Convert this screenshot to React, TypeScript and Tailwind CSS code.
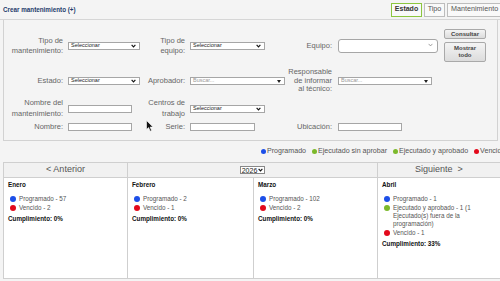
import React from 'react';

function Chevron({ light }: { light?: boolean }) {
  return (
    <svg width="5" height="4" viewBox="0 0 8 6" className="shrink-0">
      <path d="M1 1.2 L4 4.5 L7 1.2" fill="none" stroke={light ? '#777' : '#111'} strokeWidth={light ? 1.1 : 1.8} />
    </svg>
  );
}

function Tri() {
  return (
    <svg width="4" height="3" viewBox="0 0 4 3" className="shrink-0">
      <polygon points="0,0 4,0 2,3" fill="#222" />
    </svg>
  );
}

function Select({ w, text, kind = 'chev' }: { w: string; text: string; kind?: 'chev' | 'tri' }) {
  return (
    <div className={`${w} h-[8px] border border-[#a6a6a6] bg-white flex items-center justify-between pl-[2px] pr-[3px]`}>
      <span className={`text-[5.5px] leading-none ${kind === 'tri' ? 'text-[#999]' : 'text-[#222]'}`}>{text}</span>
      {kind === 'tri' ? <Tri /> : <Chevron />}
    </div>
  );
}

function Input({ w }: { w: string }) {
  return <div className={`${w} h-[8px] border border-[#a6a6a6] bg-white`} />;
}

function Label({ children, pr = 'pr-[5px]', lead = 'leading-[10px]' }: { children: React.ReactNode; pr?: string; lead?: string }) {
  return <div className={`text-right text-[7.5px] text-[#666] ${lead} ${pr}`}>{children}</div>;
}

type Item = { color: string; text: string };

const months: { name: string; items: Item[]; pct: string }[] = [
  { name: 'Enero', items: [{ color: 'bg-[#1d4fe8]', text: 'Programado - 57' }, { color: 'bg-[#e3091b]', text: 'Vencido - 2' }], pct: '0%' },
  { name: 'Febrero', items: [{ color: 'bg-[#1d4fe8]', text: 'Programado - 2' }, { color: 'bg-[#e3091b]', text: 'Vencido - 1' }], pct: '0%' },
  { name: 'Marzo', items: [{ color: 'bg-[#1d4fe8]', text: 'Programado - 102' }, { color: 'bg-[#e3091b]', text: 'Vencido - 2' }], pct: '0%' },
  {
    name: 'Abril',
    items: [
      { color: 'bg-[#1d4fe8]', text: 'Programado - 1' },
      { color: 'bg-[#7cb92b]', text: 'Ejecutado y aprobado - 1 (1 Ejecutado(s) fuera de la programación)' },
      { color: 'bg-[#e3091b]', text: 'Vencido - 1' },
    ],
    pct: '33%',
  },
];

export default function App() {
  return (
    <div className="relative w-[500px] h-[281px] overflow-hidden bg-[#f4f4f4] font-['Liberation_Sans',Arial,sans-serif]">
      {/* header */}
      <div className="h-[20px] border-b border-[#d6d6d6] flex items-center pl-[3px]">
        <div className="w-[388px] shrink-0 text-[6.3px] font-bold text-[#1f3b6b]">Crear mantenimiento (+)</div>
        <div className="flex gap-[2px] shrink-0">
          <div className="h-[14px] w-[31px] border-[1.5px] border-[#8cc63e] bg-[#f9f9f9] flex items-center justify-center text-[7px] font-bold text-[#333]">Estado</div>
          <div className="h-[14px] w-[21px] border border-[#bdbdbd] bg-[#f9f9f9] flex items-center justify-center text-[7.2px] text-[#555]">Tipo</div>
          <div className="h-[14px] w-[60px] border border-[#bdbdbd] bg-[#f9f9f9] flex items-center pl-[3px] text-[7.2px] text-[#555]">Mantenimiento</div>
        </div>
      </div>

      {/* filters */}
      <div className="ml-[3px] w-[495px] h-[121px] border-l border-r border-b border-[#d2d2d2] pt-[7px]">
        <div className="grid grid-cols-[64px_75px_47px_95px_53px_106px_42px] grid-rows-[37px_34px_21px_16px] items-center">
          <Label>Tipo de<br />mantenimiento:</Label>
          <Select w="w-[72px]" text="Seleccionar" />
          <Label>Tipo de<br />equipo:</Label>
          <Select w="w-[75px]" text="Seleccionar" />
          <Label pr="pr-[6px]">Equipo:</Label>
          <div className="w-[100px] h-[14px] rounded-[3px] border border-[#a6a6a6] bg-white flex items-start justify-end pr-[4px] pt-[3px]">
            <Chevron light />
          </div>
          <div className="flex flex-col gap-[3px]">
            <div className="h-[10px] w-[42px] rounded-[2px] border border-[#a9a9a9] bg-gradient-to-b from-[#f4f4f4] to-[#dcdcdc] flex items-center justify-center text-[6px] font-bold text-[#444]">Consultar</div>
            <div className="h-[20px] w-[42px] rounded-[2px] border border-[#a9a9a9] bg-gradient-to-b from-[#f4f4f4] to-[#dcdcdc] flex items-center justify-center text-center text-[6px] leading-[7.5px] font-bold text-[#444]">Mostrar<br />todo</div>
          </div>

          <Label>Estado:</Label>
          <Select w="w-[72px]" text="Seleccionar" />
          <Label>Aprobador:</Label>
          <Select w="w-[95px]" text="Buscar..." kind="tri" />
          <Label pr="pr-[6px]" lead="leading-[8.5px]">Responsable<br />de informar<br />al técnico:</Label>
          <Select w="w-[94px]" text="Buscar..." kind="tri" />
          <div />

          <Label lead="leading-[10.5px]">Nombre del<br />mantenimiento:</Label>
          <Input w="w-[64px]" />
          <Label lead="leading-[10.5px]">Centros de<br />trabajo</Label>
          <Select w="w-[75px]" text="Seleccionar" />
          <div />
          <div />
          <div />

          <Label>Nombre:</Label>
          <Input w="w-[64px]" />
          <Label>Serie:</Label>
          <Input w="w-[65px]" />
          <Label pr="pr-[6px]">Ubicación:</Label>
          <Input w="w-[64px]" />
          <div />
        </div>
      </div>

      {/* legend */}
      <div className="h-[21px] flex items-center pl-[261px] whitespace-nowrap text-[7.1px] text-[#555]">
        <span className="w-[5px] h-[5px] rounded-full bg-[#1d4fe8] mr-[1px] shrink-0" />
        <span className="mr-[6px]">Programado</span>
        <span className="w-[5px] h-[5px] rounded-full bg-[#7cb92b] mr-[1px] shrink-0" />
        <span className="mr-[6px]">Ejecutado sin aprobar</span>
        <span className="w-[5px] h-[5px] rounded-full bg-[#7cb92b] mr-[1px] shrink-0" />
        <span className="mr-[6px]">Ejecutado y aprobado</span>
        <span className="w-[5px] h-[5px] rounded-full bg-[#e3091b] mr-[1px] shrink-0" />
        <span>Vencido</span>
      </div>

      {/* calendar */}
      <div className="ml-[3px] w-[500px] border-l border-t border-[#cfcfcf]">
        <div className="grid grid-cols-[124px_126px_124px_126px] h-[15px] bg-[#f1f1f1] border-b border-[#cfcfcf]">
          <div className="border-r border-[#cfcfcf] flex items-center justify-center text-[9px] text-[#555]">&lt; Anterior</div>
          <div className="col-span-2 border-r border-[#cfcfcf] flex items-center justify-center">
            <div className="h-[8px] border border-[#888] bg-white flex items-center gap-[1px] px-[1px] text-[7px] leading-none text-[#222]">
              2026
              <Chevron />
            </div>
          </div>
          <div className="flex items-center justify-center text-[9px] text-[#555] pr-[4px]">Siguiente&nbsp; &gt;</div>
        </div>
        <div className="grid grid-cols-[124px_126px_124px_126px] h-[101px] border-b border-[#cfcfcf]">
          {months.map((m) => (
            <div key={m.name} className="bg-white border-r border-[#cfcfcf] pl-[4px] pr-[16px] pt-[3px] text-[6.3px] leading-[8px]">
              <div className="font-bold text-[#111] mb-[6px]">{m.name}</div>
              <div className="flex flex-col gap-[1px] pl-[1px]">
                {m.items.map((it, i) => (
                  <div key={i} className="flex items-start">
                    <span className={`w-[6px] h-[6px] rounded-full ${it.color} mt-[1px] ml-[1px] mr-[3px] shrink-0`} />
                    <span className="text-[#555]">{it.text}</span>
                  </div>
                ))}
              </div>
              <div className="font-bold text-[#111] mt-[3px]">Cumplimiento: {m.pct}</div>
            </div>
          ))}
        </div>
      </div>

      {/* mouse cursor */}
      <svg className="absolute left-[146px] top-[120px]" width="8" height="12" viewBox="0 0 8 12">
        <path d="M0.5 0.5 L0.5 9.5 L2.6 7.6 L4.2 11.2 L5.6 10.6 L4.1 7.1 L7 7.1 Z" fill="#111" stroke="#fff" strokeWidth="0.6" />
      </svg>
    </div>
  );
}
